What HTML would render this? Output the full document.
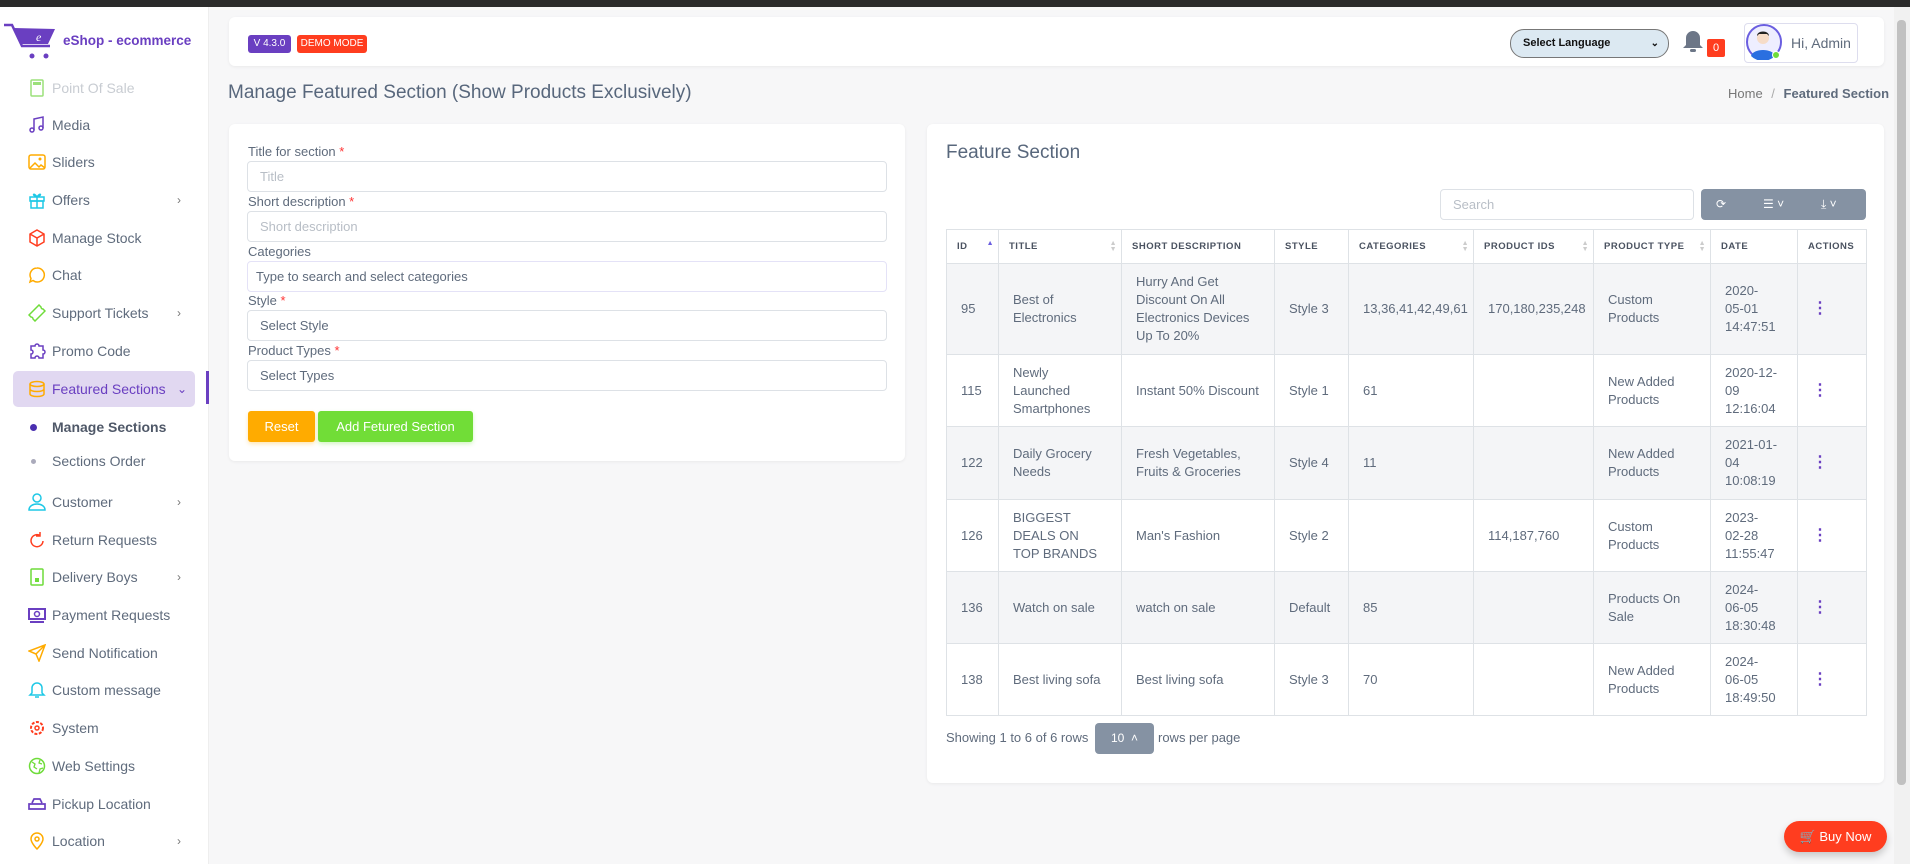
<!DOCTYPE html>
<html><head><meta charset="utf-8"><style>
*{box-sizing:border-box;margin:0;padding:0}
body{width:1910px;height:864px;overflow:hidden;background:#f7f7f8;font-family:"Liberation Sans",sans-serif;color:#5f6b7c;position:relative}
.abs{position:absolute}
.topbar{left:0;top:0;width:1910px;height:7px;background:#2b2b2b}
.side{left:0;top:7px;width:209px;height:857px;background:#fff;border-right:1px solid #eee}
.logo{left:63px;top:33px;font-size:13.5px;font-weight:bold;color:#6a3fc1}
.item{left:0;width:209px;height:30px;font-size:14px;color:#5f6b7c;display:flex;align-items:center}
.item .ic{position:absolute;left:28px;top:6px;width:18px;height:18px}
.item .t{position:absolute;left:52px}
.item .ch{position:absolute;left:177px;font-size:12px;color:#777}
.card{background:#fff;border-radius:6px;box-shadow:0 1px 3px rgba(0,0,0,.06)}
.lbl{font-size:13px;color:#5f6b7c;left:248px}
.lbl b{color:#f33;font-weight:normal}
.inp{left:247px;width:640px;height:31px;border:1px solid #dde1e6;border-radius:4px;font-size:13px;padding-left:12px;line-height:29px;background:#fff}
table{border-collapse:collapse;table-layout:fixed;font-size:13px;color:#5f6b7c}
td,th{border:1px solid #dee2e6;padding:0 14px;text-align:left;vertical-align:middle;line-height:18px}
th{font-size:9.5px;font-weight:bold;letter-spacing:.5px;height:34px;color:#4a5260;position:relative;padding:0 10px}
tr.g td{background:#f4f5f7}
.dots{color:#6a3fc1;font-weight:bold;font-size:16px}
.sort{position:absolute;right:4px;top:11px;font-size:7px;line-height:6px;color:#ccc}
</style></head><body>
<div class="abs topbar"></div>
<div class="abs side"></div>
<svg class="abs" style="left:2px;top:22px" width="64" height="40" viewBox="0 0 64 40"><path d="M2 3 L10 3 L20 24 L48 24" stroke="#6a3fc1" stroke-width="2.5" fill="none"/><path d="M12 6 L53 7 L46 22 L20 22 Z" fill="#6a3fc1"/><text x="34" y="19" font-size="12" fill="#fff" font-style="italic" font-family="Liberation Serif">e</text><circle cx="30" cy="34" r="2.5" fill="#6a3fc1"/><circle cx="44" cy="34" r="2.5" fill="#6a3fc1"/></svg>
<div class="abs logo">eShop - ecommerce</div>

<div class="abs item" style="top:73px;color:#c8ccd2"><svg class="ic" viewBox="0 0 18 18"><rect x="3" y="1" width="12" height="16" rx="1" fill="none" stroke="#9be07a" stroke-width="1.5"/><rect x="5" y="3" width="8" height="3" fill="#9be07a"/></svg><span class="t">Point Of Sale</span></div>
<div class="abs item" style="top:110px"><svg class="ic" viewBox="0 0 18 18"><path d="M6 14V3l9-2v11" stroke="#6a3fc1" stroke-width="1.5" fill="none"/><circle cx="4" cy="14" r="2" fill="none" stroke="#6a3fc1" stroke-width="1.5"/><circle cx="13" cy="12" r="2" fill="none" stroke="#6a3fc1" stroke-width="1.5"/></svg><span class="t">Media</span></div>
<div class="abs item" style="top:147px"><svg class="ic" viewBox="0 0 18 18"><rect x="1" y="2" width="16" height="14" rx="2" fill="none" stroke="#ffab00" stroke-width="1.5"/><path d="M2 15l5-5 4 4 2-2 4 3" stroke="#ffab00" stroke-width="1.5" fill="none"/><circle cx="12" cy="6" r="1.5" fill="#ffab00"/></svg><span class="t">Sliders</span></div>
<div class="abs item" style="top:185px"><svg class="ic" viewBox="0 0 18 18"><rect x="2" y="6" width="14" height="4" fill="none" stroke="#1ec8e6" stroke-width="1.5"/><rect x="3" y="10" width="12" height="7" fill="none" stroke="#1ec8e6" stroke-width="1.5"/><path d="M9 6v11M9 6C6 1 3 4 9 6M9 6c3-5 6-2 0 0" stroke="#1ec8e6" stroke-width="1.5" fill="none"/></svg><span class="t">Offers</span><span class="ch">›</span></div>
<div class="abs item" style="top:223px"><svg class="ic" viewBox="0 0 18 18"><path d="M9 1l7 4v8l-7 4-7-4V5z M2 5l7 4 7-4 M9 9v8" stroke="#ff3d1f" stroke-width="1.5" fill="none"/></svg><span class="t">Manage Stock</span></div>
<div class="abs item" style="top:260px"><svg class="ic" viewBox="0 0 18 18"><path d="M9 2a7 7 0 1 1-4 12.5L2 16l1-3.5A7 7 0 0 1 9 2z" stroke="#ffab00" stroke-width="1.5" fill="none"/></svg><span class="t">Chat</span></div>
<div class="abs item" style="top:298px"><svg class="ic" viewBox="0 0 18 18"><path d="M1 11L11 1l2 2a2 2 0 0 0 2 2l2 2L7 17l-2-2a2 2 0 0 0-2-2z" stroke="#6fdc3a" stroke-width="1.5" fill="none"/></svg><span class="t">Support Tickets</span><span class="ch">›</span></div>
<div class="abs item" style="top:336px"><svg class="ic" viewBox="0 0 18 18"><path d="M3 4h4a2 2 0 1 1 4 0h4v4a2 2 0 1 1 0 4v4h-4a2 2 0 1 0-4 0H3v-4a2 2 0 1 0 0-4z" stroke="#6a3fc1" stroke-width="1.5" fill="none"/></svg><span class="t">Promo Code</span></div>
<div class="abs" style="left:13px;top:371px;width:182px;height:36px;background:#e1d8f1;border-radius:5px"></div>
<div class="abs" style="left:206px;top:371px;width:3px;height:33px;background:#6a3fc1"></div>
<div class="abs item" style="top:374px;color:#6a3fc1"><svg class="ic" viewBox="0 0 18 18"><ellipse cx="9" cy="4" rx="7" ry="2.5" fill="none" stroke="#ffab00" stroke-width="1.5"/><path d="M2 4v10c0 1.4 3 2.5 7 2.5s7-1.1 7-2.5V4M2 9c0 1.4 3 2.5 7 2.5s7-1.1 7-2.5" stroke="#ffab00" stroke-width="1.5" fill="none"/></svg><span class="t">Featured Sections</span><span class="ch" style="color:#6a3fc1">⌄</span></div>
<div class="abs" style="left:30px;top:424px;width:7px;height:7px;border-radius:50%;background:#4a2fb0"></div>
<div class="abs" style="left:52px;top:419px;font-size:14px;font-weight:bold;color:#4f5868">Manage Sections</div>
<div class="abs" style="left:31px;top:459px;width:5px;height:5px;border-radius:50%;background:#aab"></div>
<div class="abs" style="left:52px;top:453px;font-size:14px">Sections Order</div>
<div class="abs item" style="top:487px"><svg class="ic" viewBox="0 0 18 18"><circle cx="9" cy="5" r="4" fill="none" stroke="#1ec8e6" stroke-width="1.5"/><path d="M1 17c0-4 4-6 8-6s8 2 8 6z" fill="none" stroke="#1ec8e6" stroke-width="1.5"/></svg><span class="t">Customer</span><span class="ch">›</span></div>
<div class="abs item" style="top:525px"><svg class="ic" viewBox="0 0 18 18"><path d="M15 10a6 6 0 1 1-3-5.5M12 1v4h-4" stroke="#ff3d1f" stroke-width="1.5" fill="none"/></svg><span class="t">Return Requests</span></div>
<div class="abs item" style="top:562px"><svg class="ic" viewBox="0 0 18 18"><rect x="3" y="1" width="12" height="16" rx="1" fill="none" stroke="#6fdc3a" stroke-width="1.5"/><rect x="7" y="10" width="4" height="4" fill="#6fdc3a"/></svg><span class="t">Delivery Boys</span><span class="ch">›</span></div>
<div class="abs item" style="top:600px"><svg class="ic" viewBox="0 0 18 18"><rect x="1" y="3" width="16" height="10" fill="none" stroke="#6a3fc1" stroke-width="2"/><circle cx="9" cy="8" r="2.5" fill="none" stroke="#6a3fc1" stroke-width="1.5"/><path d="M2 16h14" stroke="#6a3fc1" stroke-width="2"/></svg><span class="t">Payment Requests</span></div>
<div class="abs item" style="top:638px"><svg class="ic" viewBox="0 0 18 18"><path d="M17 1L1 7l7 3 3 7z M17 1L8 10" stroke="#ffab00" stroke-width="1.5" fill="none"/></svg><span class="t">Send Notification</span></div>
<div class="abs item" style="top:675px"><svg class="ic" viewBox="0 0 18 18"><path d="M9 2a5 5 0 0 1 5 5v5l2 2H2l2-2V7a5 5 0 0 1 5-5zM7 16h4" stroke="#1ec8e6" stroke-width="1.5" fill="none"/></svg><span class="t">Custom message</span></div>
<div class="abs item" style="top:713px"><svg class="ic" viewBox="0 0 18 18"><circle cx="9" cy="9" r="6" fill="none" stroke="#ff3d1f" stroke-width="2" stroke-dasharray="3 1.5"/><circle cx="9" cy="9" r="2" fill="none" stroke="#ff3d1f" stroke-width="1.5"/></svg><span class="t">System</span></div>
<div class="abs item" style="top:751px"><svg class="ic" viewBox="0 0 18 18"><circle cx="9" cy="9" r="7.5" fill="none" stroke="#6fdc3a" stroke-width="1.5"/><path d="M4 5l3 2-1 3 3 2M12 3l-1 3 3 1M11 16l1-4 3-1" stroke="#6fdc3a" stroke-width="1.3" fill="none"/></svg><span class="t">Web Settings</span></div>
<div class="abs item" style="top:789px"><svg class="ic" viewBox="0 0 18 18"><path d="M4 8l2-4h6l2 4M1 9h16v5H1z" stroke="#6a3fc1" stroke-width="1.7" fill="none"/></svg><span class="t">Pickup Location</span></div>
<div class="abs item" style="top:826px"><svg class="ic" viewBox="0 0 18 18"><path d="M9 17s6-6 6-10a6 6 0 0 0-12 0c0 4 6 10 6 10z" stroke="#ffab00" stroke-width="1.5" fill="none"/><circle cx="9" cy="7" r="2" fill="none" stroke="#ffab00" stroke-width="1.5"/></svg><span class="t">Location</span><span class="ch">›</span></div>

<!-- header -->
<div class="abs card" style="left:229px;top:17px;width:1655px;height:49px"></div>
<div class="abs" style="left:248px;top:35px;width:43px;height:18px;background:#6a3fc1;color:#fff;font-size:10px;border-radius:3px;text-align:center;line-height:18px">V 4.3.0</div>
<div class="abs" style="left:297px;top:35px;width:70px;height:18px;background:#ff3d1f;color:#fff;font-size:10px;border-radius:3px;text-align:center;line-height:18px">DEMO MODE</div>
<div class="abs" style="left:1510px;top:29px;width:159px;height:29px;background:#dce9f2;border:1px solid #777;border-radius:14px;font-size:11px;font-weight:bold;color:#111;line-height:27px;padding-left:12px">Select Language<span style="position:absolute;right:9px;font-size:10px">&#8964;</span></div>
<svg class="abs" style="left:1681px;top:29px" width="24" height="26" viewBox="0 0 24 26"><path d="M12 2a7 7 0 0 1 7 7v7l3 3H2l3-3V9a7 7 0 0 1 7-7z" fill="#6c7687"/><rect x="9" y="20" width="6" height="3" rx="1.5" fill="#6c7687"/></svg>
<div class="abs" style="left:1707px;top:39px;width:18px;height:18px;background:#ff3d1f;color:#fff;font-size:11px;text-align:center;line-height:18px;border-radius:2px">0</div>
<div class="abs" style="left:1744px;top:23px;width:114px;height:40px;border:1px solid #dde;border-radius:4px;background:#fff"></div>
<svg class="abs" style="left:1746px;top:24px" width="36" height="36" viewBox="0 0 36 36"><circle cx="18" cy="18" r="17" fill="#eef" stroke="#6a5ee0" stroke-width="2"/><circle cx="17" cy="14" r="6" fill="#f6dcc8"/><path d="M11 12c0-6 12-6 12 0l-2-2h-8z" fill="#222"/><path d="M5 32c2-8 22-8 24 0a17 17 0 0 1-24 0z" fill="#2a6fe0"/><circle cx="30" cy="31" r="3.5" fill="#6fdc3a" stroke="#fff"/></svg>
<div class="abs" style="left:1791px;top:35px;font-size:14px;color:#5f6b7c">Hi, Admin</div>

<div class="abs" style="left:228px;top:82px;font-size:19px;color:#58677c">Manage Featured Section (Show Products Exclusively)</div>
<div class="abs" style="left:1728px;top:86px;font-size:13px;color:#777">Home <span style="color:#aaa;margin:0 5px">/</span> <b style="color:#5f6b7c">Featured Section</b></div>

<!-- left card -->
<div class="abs card" style="left:229px;top:124px;width:676px;height:337px"></div>
<div class="abs lbl" style="top:144px">Title for section <b>*</b></div>
<div class="abs inp" style="top:161px;color:#b8bec6">Title</div>
<div class="abs lbl" style="top:194px">Short description <b>*</b></div>
<div class="abs inp" style="top:211px;color:#b8bec6">Short description</div>
<div class="abs lbl" style="top:244px">Categories</div>
<div class="abs inp" style="top:261px;border-color:#e4e2f7;padding-left:8px;color:#5f6b7c">Type to search and select categories</div>
<div class="abs lbl" style="top:293px">Style <b>*</b></div>
<div class="abs inp" style="top:310px">Select Style</div>
<div class="abs lbl" style="top:343px">Product Types <b>*</b></div>
<div class="abs inp" style="top:360px">Select Types</div>
<div class="abs" style="left:248px;top:411px;width:67px;height:31px;background:#ffab00;color:#fff;font-size:13px;border-radius:3px;text-align:center;line-height:31px;box-shadow:0 2px 4px rgba(255,171,0,.3)">Reset</div>
<div class="abs" style="left:318px;top:411px;width:155px;height:31px;background:#71dd37;color:#fff;font-size:13px;border-radius:3px;text-align:center;line-height:31px;box-shadow:0 2px 4px rgba(113,221,55,.3)">Add Fetured Section</div>

<!-- right card -->
<div class="abs card" style="left:927px;top:124px;width:957px;height:659px"></div>
<div class="abs" style="left:946px;top:142px;font-size:19px;color:#58677c">Feature Section</div>
<div class="abs" style="left:1440px;top:189px;width:254px;height:31px;border:1px solid #dde1e6;border-radius:4px;font-size:13px;color:#b8bec6;line-height:29px;padding-left:12px">Search</div>
<div class="abs" style="left:1701px;top:189px;width:165px;height:31px;background:#8592a3;border-radius:4px;color:#fff;font-size:12px;line-height:31px">
<span style="position:absolute;left:15px">⟳</span><span style="position:absolute;left:62px">☰ ˅</span><span style="position:absolute;left:120px">⤓ ˅</span></div>
<table class="abs" style="left:946px;top:229px;width:920px">
<colgroup><col style="width:52px"><col style="width:123px"><col style="width:153px"><col style="width:74px"><col style="width:125px"><col style="width:120px"><col style="width:117px"><col style="width:87px"><col style="width:69px"></colgroup>
<tr><th>ID<span class="sort" style="color:#6a5ee0">▲</span></th><th>TITLE<span class="sort">▲<br>▼</span></th><th>SHORT DESCRIPTION</th><th>STYLE</th><th>CATEGORIES<span class="sort">▲<br>▼</span></th><th>PRODUCT IDS<span class="sort">▲<br>▼</span></th><th>PRODUCT TYPE<span class="sort">▲<br>▼</span></th><th>DATE</th><th>ACTIONS</th></tr>
<tr class="g" style="height:91px"><td>95</td><td>Best of Electronics</td><td>Hurry And Get Discount On All Electronics Devices Up To 20%</td><td>Style 3</td><td>13,36,41,42,49,61</td><td>170,180,235,248</td><td>Custom Products</td><td>2020-<br>05-01<br>14:47:51</td><td class="dots">⋮</td></tr>
<tr style="height:72px"><td>115</td><td>Newly Launched Smartphones</td><td>Instant 50% Discount</td><td>Style 1</td><td>61</td><td></td><td>New Added Products</td><td>2020-12-<br>09<br>12:16:04</td><td class="dots">⋮</td></tr>
<tr class="g" style="height:73px"><td>122</td><td>Daily Grocery Needs</td><td>Fresh Vegetables, Fruits &amp; Groceries</td><td>Style 4</td><td>11</td><td></td><td>New Added Products</td><td>2021-01-<br>04<br>10:08:19</td><td class="dots">⋮</td></tr>
<tr style="height:72px"><td>126</td><td>BIGGEST DEALS ON TOP BRANDS</td><td>Man's Fashion</td><td>Style 2</td><td></td><td>114,187,760</td><td>Custom Products</td><td>2023-<br>02-28<br>11:55:47</td><td class="dots">⋮</td></tr>
<tr class="g" style="height:72px"><td>136</td><td>Watch on sale</td><td>watch on sale</td><td>Default</td><td>85</td><td></td><td>Products On Sale</td><td>2024-<br>06-05<br>18:30:48</td><td class="dots">⋮</td></tr>
<tr style="height:72px"><td>138</td><td>Best living sofa</td><td>Best living sofa</td><td>Style 3</td><td>70</td><td></td><td>New Added Products</td><td>2024-<br>06-05<br>18:49:50</td><td class="dots">⋮</td></tr>
</table>
<div class="abs" style="left:946px;top:730px;font-size:13px">Showing 1 to 6 of 6 rows</div>
<div class="abs" style="left:1095px;top:723px;width:59px;height:31px;background:#8592a3;color:#fff;font-size:12px;border-radius:4px;text-align:center;line-height:31px">10 &nbsp;˄</div>
<div class="abs" style="left:1158px;top:730px;font-size:13px">rows per page</div>

<div class="abs" style="left:1784px;top:821px;width:103px;height:31px;background:#ff3d1f;color:#fff;font-size:13px;border-radius:16px;text-align:center;line-height:31px;box-shadow:0 4px 8px rgba(0,0,0,.2)">🛒 Buy Now</div>
<div class="abs" style="left:1894px;top:7px;width:16px;height:857px;background:#f1f1f1"></div>
<div class="abs" style="left:1897px;top:20px;width:9px;height:765px;background:#c1c1c1;border-radius:4px"></div>
</body></html>
